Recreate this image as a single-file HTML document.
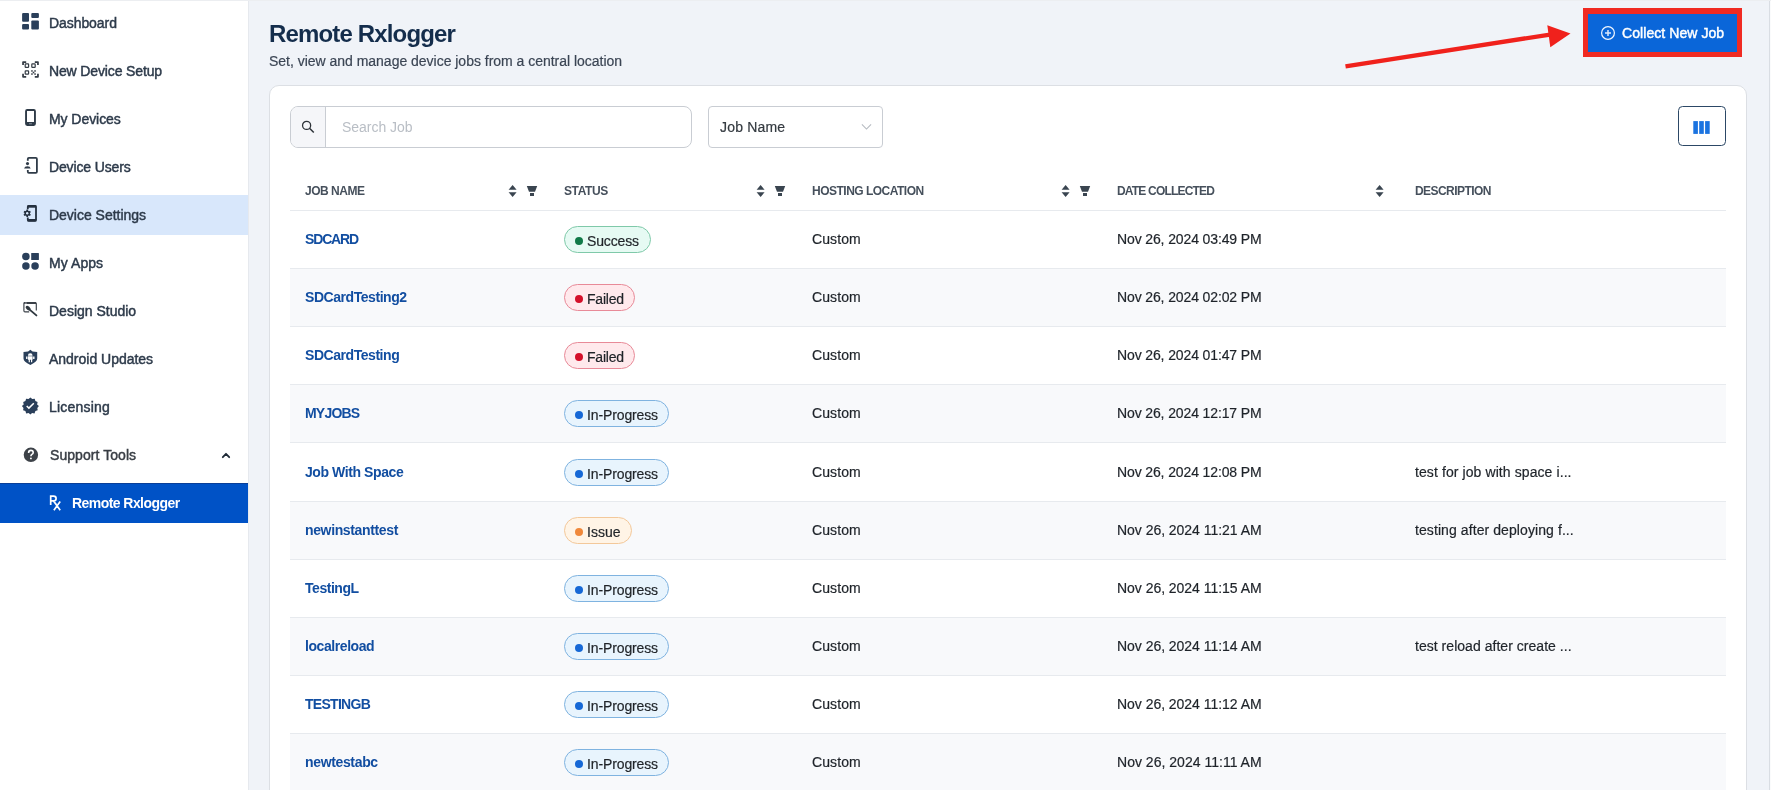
<!DOCTYPE html>
<html><head><meta charset="utf-8">
<style>
*{box-sizing:border-box;margin:0;padding:0}
html,body{width:1771px;height:790px;overflow:hidden}
body{font-family:"Liberation Sans",sans-serif;background:#f0f3f8;position:relative;color:#1f2a37}
.abs{position:absolute}
.sb{position:absolute;left:0;top:0;width:248px;height:790px;background:#fff}
.ni{position:absolute;left:0;width:248px;height:40px;font-size:14px;color:#2b3748;}
.ni .t{position:absolute;left:49px;top:13px;line-height:16px;white-space:nowrap}
.ni svg{position:absolute}
.ni.sel{background:#d8e7fb}
.ni.act{background:#0052c6;color:#fff}
.h1{position:absolute;left:269px;top:20px;font-size:24px;font-weight:bold;color:#142d4c;line-height:28px;white-space:nowrap}
.sub{position:absolute;left:269px;top:53px;font-size:14px;color:#3b4554;line-height:16px;white-space:nowrap}
.card{position:absolute;left:269px;top:85px;width:1478px;height:721px;background:#fff;border:1px solid #dcdfe4;border-radius:10px}
.search{position:absolute;left:290px;top:106px;width:402px;height:42px;border:1px solid #c9cdd3;border-radius:8px;background:#fff;overflow:hidden}
.search .ic{position:absolute;left:0;top:0;width:35px;height:40px;background:#f5f6f9;border-right:1px solid #c9cdd3}
.search .ph{position:absolute;left:52px;top:12px;font-size:14px;line-height:16px;color:#b9bec5}
.dd{position:absolute;left:708px;top:106px;width:175px;height:42px;border:1px solid #c9cdd3;border-radius:4px;background:#fff}
.dd .v{position:absolute;left:11px;top:12px;font-size:14px;line-height:16px;color:#343a40}
.colbtn{position:absolute;left:1678px;top:106px;width:48px;height:40px;border:1.3px solid #2c4866;border-radius:4.5px;background:#fff}
.th{position:absolute;top:184px;font-size:12px;line-height:14px;font-weight:bold;color:#3d4754;white-space:nowrap}
.ln{position:absolute;left:290px;width:1436px;height:1px;background:#e7eaee}
.row{position:absolute;left:290px;width:1436px}
.jn{position:absolute;left:305px;font-size:14px;line-height:16px;color:#0b4ea2;font-weight:bold;white-space:nowrap}
.td{position:absolute;font-size:14px;line-height:16px;color:#1e2329;white-space:nowrap}
.bd{position:absolute;left:564px;height:27px;border-radius:13.5px;border:1px solid;font-size:14px;line-height:24px;padding-left:23px;color:#1f2328;white-space:nowrap}
.bd i{position:absolute;left:10.2px;top:10.2px;width:8px;height:8px;border-radius:50%}
.bd.s{background:#e6faf3;border-color:#7fc9a9}.bd.s i{background:#117a48}
.bd.f{background:#ffe9ec;border-color:#e88a98}.bd.f i{background:#d4102a}
.bd.p{background:#e8f4fd;border-color:#7fb3e0}.bd.p i{background:#1668d6}
.bd.i{background:#fff4e6;border-color:#f3c89a}.bd.i i{background:#f0883a}
.btn-out{position:absolute;left:1583px;top:8px;width:159px;height:49px;background:#f02a22}
.btn{position:absolute;left:1588px;top:14px;width:149px;height:38px;background:#0a66d9;color:#fff;font-size:14px}
.btn .t{position:absolute;left:35px;top:11px;line-height:16px;white-space:nowrap}
.tx{position:absolute;line-height:1;white-space:nowrap;z-index:5;will-change:transform}
.stk{-webkit-text-stroke:0.45px currentColor}
.edge{position:absolute;left:1769px;top:0;width:1px;height:790px;background:#d9dde3}
.edge2{position:absolute;left:1770px;top:0;width:1px;height:790px;background:#fafbfc}
.sbb{position:absolute;left:248px;top:0;width:1px;height:790px;background:#e6e9ee}
.topl{position:absolute;left:0;top:0;width:1771px;height:1px;background:#eceef1;z-index:9}
.stk2{-webkit-text-stroke:0.2px currentColor}
.ni.act{box-shadow:inset 0 1px 0 #0a3f98}

</style></head><body>
<div class="sb">
  <svg class="abs" style="left:0;top:0;z-index:2" width="248" height="530" viewBox="0 0 248 530">
    <g fill="#2a3f5a">
      <!-- dashboard -->
      <rect x="22.1" y="13.1" width="6.9" height="8.7" rx="1"/>
      <rect x="22.1" y="24.1" width="6.9" height="5.5" rx="1"/>
      <rect x="31.3" y="13.1" width="7.6" height="4.8" rx="1"/>
      <rect x="31.3" y="20.5" width="7.6" height="9.1" rx="1"/>
    </g>
    <!-- QR -->
    <g fill="none" stroke="#353c45" stroke-width="1.75" stroke-linejoin="round">
      <path d="M23.05 65 V62.05 H26.2 M34.8 62.05 H37.95 V65 M37.95 73.8 V76.75 H34.8 M26.2 76.75 H23.05 V73.8"/>
    </g>
    <g fill="none" stroke="#353c45" stroke-width="1.2">
      <rect x="25.2" y="63.9" width="3.4" height="3.4" rx="0.6"/>
      <rect x="31.8" y="63.9" width="3.4" height="3.4" rx="0.6"/>
      <rect x="25.2" y="70.8" width="3.4" height="3.4" rx="0.6"/>
    </g>
    <g fill="#353c45">
      <rect x="31.2" y="70.2" width="1.5" height="1.5"/><rect x="34.3" y="70.2" width="1.5" height="1.5"/>
      <rect x="32.7" y="71.7" width="1.6" height="1.6"/>
      <rect x="31.2" y="73.3" width="1.5" height="1.5"/><rect x="34.3" y="73.3" width="1.5" height="1.5"/>
    </g>
    <!-- my devices phone -->
    <path d="M27.2 109.1 H33.8 A2.1 2.1 0 0 1 35.9 111.2 V123.8 A2.1 2.1 0 0 1 33.8 125.9 H27.2 A2.1 2.1 0 0 1 25.1 123.8 V111.2 A2.1 2.1 0 0 1 27.2 109.1 Z M27 111 V121.9 H34 V111 Z" fill="#2f3b48" fill-rule="evenodd"/>
    <rect x="29" y="123.3" width="2.9" height="0.9" fill="#8c96a2"/>
    <!-- device users -->
    <path d="M27.8 160.7 V159 Q27.8 157.9 28.9 157.9 H35.8 Q36.9 157.9 36.9 159 V171.8 Q36.9 172.9 35.8 172.9 H28.9 Q27.8 172.9 27.8 171.8 V169.9" fill="none" stroke="#2f3b48" stroke-width="1.8"/>
    <circle cx="27.5" cy="163.6" r="1.55" fill="#2f3b48"/>
    <path d="M24.1 168.6 Q24.5 166.3 27.4 166.3 Q30.3 166.3 30.7 168.6 Z" fill="#2f3b48"/>
    <!-- device settings -->
    <path d="M27.8 209.2 V206.8 Q27.8 205.8 28.8 205.8 H35 Q36 205.8 36 206.8 V219.8 Q36 220.8 35 220.8 H28.8 Q27.8 220.8 27.8 219.8 V217.6" fill="none" stroke="#24303f" stroke-width="1.8"/>
    <rect x="27.5" y="205.2" width="8.8" height="2.5" fill="#24303f"/>
    <rect x="27.5" y="219" width="8.8" height="2.4" fill="#24303f"/>
    <g transform="translate(27.2 213.3)" fill="#24303f">
      <circle r="2.75"/>
      <rect x="-0.85" y="-3.75" width="1.7" height="7.5"/>
      <rect x="-0.85" y="-3.75" width="1.7" height="7.5" transform="rotate(60)"/>
      <rect x="-0.85" y="-3.75" width="1.7" height="7.5" transform="rotate(120)"/>
      <circle r="1.2" fill="#d8e7fb"/>
    </g>
    <!-- my apps -->
    <g fill="#2a3f5a">
      <circle cx="25.9" cy="256.6" r="3.75"/>
      <rect x="31.2" y="253.1" width="7.7" height="6.9" rx="0.5"/>
      <circle cx="25.9" cy="265.9" r="3.75"/>
      <circle cx="35.05" cy="265.9" r="3.75"/>
    </g>
    <!-- design studio -->
    <path d="M29.2 311.9 H25 Q23.9 311.9 23.9 310.8 V303.3 Q23.9 302.6 25 302.6 H35.2 Q36.3 302.6 36.3 303.6 V310.4" fill="none" stroke="#3a4048" stroke-width="1.15"/>
    <rect x="24.2" y="302.1" width="11.8" height="1.9" fill="#3a4048"/>
    <rect x="25.4" y="302.6" width="1.1" height="1" fill="#fff"/>
    <path d="M29.6 309.6 L36.4 315.4" stroke="#2f3840" stroke-width="1.9" stroke-linecap="round"/><ellipse cx="28.1" cy="308.1" rx="2.9" ry="1.75" transform="rotate(42 28.1 308.1)" fill="#2f3840"/>
    <!-- android shield -->
    <path d="M30.35 349.8 L32.6 351.4 L37.2 351.9 V358.6 Q37.2 361.9 30.35 365 Q23.5 361.9 23.5 358.6 V351.9 L28.1 351.4 Z" fill="#2a3f5a"/>
    <path d="M27.9 355.7 A2.35 2.35 0 0 1 32.6 355.7 Z M27.9 356.2 H32.6 V359.8 H32.2 V362.2 H31 V359.8 H29.9 V362.2 H28.7 V359.8 H27.9 Z M26.1 356.4 H27.4 V359.1 H26.1 Z M33.1 356.4 H34.5 V359.1 H33.1 Z" fill="#fff"/>
    <!-- licensing seal -->
    <path d="M30.4 397.6 L32.3 399.1 L34.7 398.7 L35.4 401 L37.6 402 L37.1 404.4 L38.9 406.1 L37.3 407.9 L37.7 410.3 L35.4 411.1 L34.5 413.4 L32.1 412.9 L30.4 414.6 L28.6 412.9 L26.2 413.4 L25.4 411.1 L23.1 410.3 L23.5 407.9 L21.9 406.1 L23.7 404.4 L23.2 402 L25.4 401 L26.1 398.7 L28.5 399.1 Z" fill="#2a3f5a"/>
    <path d="M26.7 406 L28.9 408.1 L33.8 403.2" fill="none" stroke="#fff" stroke-width="1.5"/>
    <!-- support tools ? -->
    <circle cx="30.9" cy="454.8" r="7.2" fill="#3d4248"/>
    <path d="M28.6 452.9 Q28.6 450.4 30.9 450.4 Q33.2 450.4 33.2 452.5 Q33.2 453.7 31.9 454.4 Q30.9 455 30.9 456.3" fill="none" stroke="#fff" stroke-width="1.6"/>
    <circle cx="30.9" cy="458.4" r="0.95" fill="#fff"/>
    <!-- chevron -->
    <path d="M222.8 457.2 L226 453.8 L229.2 457.2" fill="none" stroke="#1f2a37" stroke-width="1.8" stroke-linecap="round" stroke-linejoin="round"/>
    <!-- Rx -->
    <path d="M50.7 505 V496.1 H53.6 Q56.1 496.1 56.1 498.5 Q56.1 500.9 53.6 500.9 H50.7 M53.4 500.9 L56.3 504.6 M53.9 501.4 L60.2 510.2 M60.2 501.4 L53.9 510.2" fill="none" stroke="#fff" stroke-width="1.7"/>
  </svg>
  <div class="ni" style="top:2px"></div>
  <div class="ni" style="top:50px"></div>
  <div class="ni" style="top:98px"></div>
  <div class="ni" style="top:146px"></div>
  <div class="ni sel" style="top:195px"></div>
  <div class="ni" style="top:242px"></div>
  <div class="ni" style="top:290px"></div>
  <div class="ni" style="top:338px"></div>
  <div class="ni" style="top:386px"></div>
  <div class="ni" style="top:434px"></div>
  <div class="ni act" style="top:483px"></div>
</div>

<div class="sbb"></div><div class="edge"></div><div class="edge2"></div><div class="topl"></div>
<div class="btn-out"></div>
<div class="btn"><svg class="abs" style="left:12px;top:11px" width="16" height="16" viewBox="0 0 16 16"><circle cx="8" cy="8" r="6.4" fill="none" stroke="#f2f7ff" stroke-width="1.2"/><path d="M8 5 V11 M5 8 H11" stroke="#dce8fb" stroke-width="1.5"/></svg></div>
<svg class="abs" style="left:1330px;top:15px" width="260" height="65" viewBox="1330 15 260 65">
  <path d="M1345.5 66.4 L1550 34.6" stroke="#f0211c" stroke-width="4.4" stroke-linecap="butt"/>
  <path d="M1547.3 25.3 L1570.5 33.4 L1550.3 47.3 Z" fill="#f0211c"/>
</svg>
<div class="card"></div>
<div class="search"><div class="ic"><svg class="abs" style="left:10px;top:13px;overflow:visible" width="16" height="16" viewBox="0 0 16 16"><circle cx="5.6" cy="5.4" r="4.05" fill="none" stroke="#2d3339" stroke-width="1.3"/><path d="M8.5 8.3 L12.8 12.5" stroke="#2d3339" stroke-width="1.5"/></svg></div></div>
<div class="dd"><svg class="abs" style="left:150px;top:14px" width="16" height="12" viewBox="0 0 16 12"><path d="M2.9 3.3 L7.5 8.1 L12.1 3.3" fill="none" stroke="#b5bac0" stroke-width="1.05"/></svg></div>
<div class="colbtn"><svg class="abs" style="left:14px;top:14px" width="18" height="13" viewBox="0 0 18 13"><rect x="0.3" y="0.1" width="4.6" height="12.8" fill="#1a73e0"/><rect x="6.2" y="0.1" width="4.6" height="12.8" fill="#1a73e0"/><rect x="12.1" y="0.1" width="4.6" height="12.8" fill="#1a73e0"/></svg></div>


<svg class="abs" style="left:508px;top:184px" width="10" height="14" viewBox="0 0 10 14"><path d="M4.6 1 L8.6 5.7 L0.6 5.7Z M0.6 8.2 L8.6 8.2 L4.6 13Z" fill="#3a4550"/></svg><svg class="abs" style="left:526px;top:185px" width="12" height="12" viewBox="0 0 12 12"><path d="M0.8 1 L11.2 1 L9 6.7 L3 6.7Z M4 8 L8 8 L8 11 L4 11Z" fill="#3a4550"/></svg>
<svg class="abs" style="left:756px;top:184px" width="10" height="14" viewBox="0 0 10 14"><path d="M4.6 1 L8.6 5.7 L0.6 5.7Z M0.6 8.2 L8.6 8.2 L4.6 13Z" fill="#3a4550"/></svg><svg class="abs" style="left:774px;top:185px" width="12" height="12" viewBox="0 0 12 12"><path d="M0.8 1 L11.2 1 L9 6.7 L3 6.7Z M4 8 L8 8 L8 11 L4 11Z" fill="#3a4550"/></svg>
<svg class="abs" style="left:1061px;top:184px" width="10" height="14" viewBox="0 0 10 14"><path d="M4.6 1 L8.6 5.7 L0.6 5.7Z M0.6 8.2 L8.6 8.2 L4.6 13Z" fill="#3a4550"/></svg><svg class="abs" style="left:1079px;top:185px" width="12" height="12" viewBox="0 0 12 12"><path d="M0.8 1 L11.2 1 L9 6.7 L3 6.7Z M4 8 L8 8 L8 11 L4 11Z" fill="#3a4550"/></svg>
<svg class="abs" style="left:1375px;top:184px" width="10" height="14" viewBox="0 0 10 14"><path d="M4.6 1 L8.6 5.7 L0.6 5.7Z M0.6 8.2 L8.6 8.2 L4.6 13Z" fill="#3a4550"/></svg>
<div class="ln" style="top:210px"></div>

<div class="row" style="top:211px;height:57px;background:#fff"></div>
<div class="ln" style="top:268px"></div>
<div class="bd s" style="top:226px;width:87px"><i></i></div>
<div class="row" style="top:269px;height:57px;background:#f8f9fb"></div>
<div class="ln" style="top:326px"></div>
<div class="bd f" style="top:284px;width:71px"><i></i></div>
<div class="row" style="top:327px;height:57px;background:#fff"></div>
<div class="ln" style="top:384px"></div>
<div class="bd f" style="top:342px;width:71px"><i></i></div>
<div class="row" style="top:385px;height:57px;background:#f8f9fb"></div>
<div class="ln" style="top:442px"></div>
<div class="bd p" style="top:400px;width:105px"><i></i></div>
<div class="row" style="top:443px;height:58px;background:#fff"></div>
<div class="ln" style="top:501px"></div>
<div class="bd p" style="top:459px;width:105px"><i></i></div>
<div class="row" style="top:502px;height:57px;background:#f8f9fb"></div>
<div class="ln" style="top:559px"></div>
<div class="bd i" style="top:517px;width:68px"><i></i></div>
<div class="row" style="top:560px;height:57px;background:#fff"></div>
<div class="ln" style="top:617px"></div>
<div class="bd p" style="top:575px;width:105px"><i></i></div>
<div class="row" style="top:618px;height:57px;background:#f8f9fb"></div>
<div class="ln" style="top:675px"></div>
<div class="bd p" style="top:633px;width:105px"><i></i></div>
<div class="row" style="top:676px;height:57px;background:#fff"></div>
<div class="ln" style="top:733px"></div>
<div class="bd p" style="top:691px;width:105px"><i></i></div>
<div class="row" style="top:734px;height:57px;background:#f8f9fb"></div>
<div class="ln" style="top:791px"></div>
<div class="bd p" style="top:749px;width:105px"><i></i></div>
<div class="tx stk" style="left:48.96px;top:16.15px;font-size:14px;color:#2d3a4a;font-weight:normal;letter-spacing:-0.072px">Dashboard</div>
<div class="tx stk" style="left:48.96px;top:64.15px;font-size:14px;color:#2d3a4a;font-weight:normal;letter-spacing:-0.137px">New Device Setup</div>
<div class="tx stk" style="left:48.96px;top:112.15px;font-size:14px;color:#2d3a4a;font-weight:normal;letter-spacing:-0.060px">My Devices</div>
<div class="tx stk" style="left:48.96px;top:160.15px;font-size:14px;color:#2d3a4a;font-weight:normal;letter-spacing:-0.139px">Device Users</div>
<div class="tx stk" style="left:48.96px;top:208.15px;font-size:14px;color:#2d3a4a;font-weight:normal;letter-spacing:-0.012px">Device Settings</div>
<div class="tx stk" style="left:48.96px;top:256.15px;font-size:14px;color:#2d3a4a;font-weight:normal;letter-spacing:0.069px">My Apps</div>
<div class="tx stk" style="left:48.96px;top:304.15px;font-size:14px;color:#2d3a4a;font-weight:normal;letter-spacing:-0.004px">Design Studio</div>
<div class="tx stk" style="left:48.96px;top:352.15px;font-size:14px;color:#2d3a4a;font-weight:normal;letter-spacing:-0.013px">Android Updates</div>
<div class="tx stk" style="left:48.96px;top:400.15px;font-size:14px;color:#2d3a4a;font-weight:normal;letter-spacing:0.195px">Licensing</div>
<div class="tx stk" style="left:50.06px;top:448.15px;font-size:14px;color:#383d44;font-weight:normal;letter-spacing:0.063px">Support Tools</div>
<div class="tx" style="left:71.96px;top:496.15px;font-size:14px;color:#ffffff;font-weight:bold;letter-spacing:-0.557px">Remote Rxlogger</div>
<div class="tx" style="left:268.96px;top:21.68px;font-size:24px;color:#142d4c;font-weight:bold;letter-spacing:-0.842px">Remote Rxlogger</div>
<div class="tx stk2" style="left:268.86px;top:53.85px;font-size:14px;color:#3b4554;font-weight:normal;letter-spacing:-0.018px">Set, view and manage device jobs from a central location</div>
<div class="tx stk" style="left:1622.36px;top:25.95px;font-size:14px;color:#ffffff;font-weight:normal;letter-spacing:0.069px">Collect New Job</div>
<div class="tx" style="left:342.36px;top:120.15px;font-size:14px;color:#b9bec5;font-weight:normal;letter-spacing:-0.023px">Search Job</div>
<div class="tx stk2" style="left:719.86px;top:120.25px;font-size:14px;color:#343a40;font-weight:normal;letter-spacing:0.187px">Job Name</div>
<div class="tx" style="left:304.98px;top:184.84px;font-size:12px;color:#46505c;font-weight:bold;letter-spacing:-0.483px">JOB NAME</div>
<div class="tx" style="left:564.38px;top:184.84px;font-size:12px;color:#46505c;font-weight:bold;letter-spacing:-0.392px">STATUS</div>
<div class="tx" style="left:811.98px;top:184.84px;font-size:12px;color:#46505c;font-weight:bold;letter-spacing:-0.508px">HOSTING LOCATION</div>
<div class="tx" style="left:1117.38px;top:184.84px;font-size:12px;color:#46505c;font-weight:bold;letter-spacing:-0.807px">DATE COLLECTED</div>
<div class="tx" style="left:1415.48px;top:184.84px;font-size:12px;color:#46505c;font-weight:bold;letter-spacing:-0.566px">DESCRIPTION</div>
<div class="tx" style="left:304.76px;top:232.15px;font-size:14px;color:#124ea1;font-weight:bold;letter-spacing:-1.154px">SDCARD</div>
<div class="tx stk2" style="left:587.36px;top:233.75px;font-size:14px;color:#1f2328;font-weight:normal;letter-spacing:-0.134px">Success</div>
<div class="tx stk2" style="left:811.86px;top:231.85px;font-size:14px;color:#1e2329;font-weight:normal;letter-spacing:0.097px">Custom</div>
<div class="tx stk2" style="left:1117.26px;top:231.55px;font-size:14px;color:#1e2329;font-weight:normal;letter-spacing:-0.124px">Nov 26, 2024 03:49 PM</div>
<div class="tx" style="left:304.76px;top:290.15px;font-size:14px;color:#124ea1;font-weight:bold;letter-spacing:-0.443px">SDCardTesting2</div>
<div class="tx stk2" style="left:587.36px;top:291.75px;font-size:14px;color:#1f2328;font-weight:normal;letter-spacing:-0.204px">Failed</div>
<div class="tx stk2" style="left:811.86px;top:289.85px;font-size:14px;color:#1e2329;font-weight:normal;letter-spacing:0.097px">Custom</div>
<div class="tx stk2" style="left:1117.26px;top:289.55px;font-size:14px;color:#1e2329;font-weight:normal;letter-spacing:-0.124px">Nov 26, 2024 02:02 PM</div>
<div class="tx" style="left:304.76px;top:348.15px;font-size:14px;color:#124ea1;font-weight:bold;letter-spacing:-0.448px">SDCardTesting</div>
<div class="tx stk2" style="left:587.36px;top:349.75px;font-size:14px;color:#1f2328;font-weight:normal;letter-spacing:-0.204px">Failed</div>
<div class="tx stk2" style="left:811.86px;top:347.85px;font-size:14px;color:#1e2329;font-weight:normal;letter-spacing:0.097px">Custom</div>
<div class="tx stk2" style="left:1117.26px;top:347.55px;font-size:14px;color:#1e2329;font-weight:normal;letter-spacing:-0.124px">Nov 26, 2024 01:47 PM</div>
<div class="tx" style="left:304.76px;top:406.15px;font-size:14px;color:#124ea1;font-weight:bold;letter-spacing:-0.801px">MYJOBS</div>
<div class="tx stk2" style="left:587.36px;top:407.75px;font-size:14px;color:#1f2328;font-weight:normal;letter-spacing:-0.124px">In-Progress</div>
<div class="tx stk2" style="left:811.86px;top:405.85px;font-size:14px;color:#1e2329;font-weight:normal;letter-spacing:0.097px">Custom</div>
<div class="tx stk2" style="left:1117.26px;top:405.55px;font-size:14px;color:#1e2329;font-weight:normal;letter-spacing:-0.124px">Nov 26, 2024 12:17 PM</div>
<div class="tx" style="left:304.76px;top:465.15px;font-size:14px;color:#124ea1;font-weight:bold;letter-spacing:-0.416px">Job With Space</div>
<div class="tx stk2" style="left:587.36px;top:466.75px;font-size:14px;color:#1f2328;font-weight:normal;letter-spacing:-0.124px">In-Progress</div>
<div class="tx stk2" style="left:811.86px;top:464.85px;font-size:14px;color:#1e2329;font-weight:normal;letter-spacing:0.097px">Custom</div>
<div class="tx stk2" style="left:1117.26px;top:464.55px;font-size:14px;color:#1e2329;font-weight:normal;letter-spacing:-0.124px">Nov 26, 2024 12:08 PM</div>
<div class="tx stk2" style="left:1414.86px;top:464.55px;font-size:14px;color:#1e2329;font-weight:normal;letter-spacing:0.090px">test for job with space i...</div>
<div class="tx" style="left:304.76px;top:523.15px;font-size:14px;color:#124ea1;font-weight:bold;letter-spacing:-0.361px">newinstanttest</div>
<div class="tx stk2" style="left:587.36px;top:524.75px;font-size:14px;color:#1f2328;font-weight:normal;letter-spacing:0.013px">Issue</div>
<div class="tx stk2" style="left:811.86px;top:522.85px;font-size:14px;color:#1e2329;font-weight:normal;letter-spacing:0.097px">Custom</div>
<div class="tx stk2" style="left:1117.26px;top:522.55px;font-size:14px;color:#1e2329;font-weight:normal;letter-spacing:-0.034px">Nov 26, 2024 11:21 AM</div>
<div class="tx stk2" style="left:1414.86px;top:522.55px;font-size:14px;color:#1e2329;font-weight:normal;letter-spacing:0.085px">testing after deploying f...</div>
<div class="tx" style="left:304.76px;top:581.15px;font-size:14px;color:#124ea1;font-weight:bold;letter-spacing:-0.454px">TestingL</div>
<div class="tx stk2" style="left:587.36px;top:582.75px;font-size:14px;color:#1f2328;font-weight:normal;letter-spacing:-0.124px">In-Progress</div>
<div class="tx stk2" style="left:811.86px;top:580.85px;font-size:14px;color:#1e2329;font-weight:normal;letter-spacing:0.097px">Custom</div>
<div class="tx stk2" style="left:1117.26px;top:580.55px;font-size:14px;color:#1e2329;font-weight:normal;letter-spacing:-0.034px">Nov 26, 2024 11:15 AM</div>
<div class="tx" style="left:304.76px;top:639.15px;font-size:14px;color:#124ea1;font-weight:bold;letter-spacing:-0.430px">localreload</div>
<div class="tx stk2" style="left:587.36px;top:640.75px;font-size:14px;color:#1f2328;font-weight:normal;letter-spacing:-0.124px">In-Progress</div>
<div class="tx stk2" style="left:811.86px;top:638.85px;font-size:14px;color:#1e2329;font-weight:normal;letter-spacing:0.097px">Custom</div>
<div class="tx stk2" style="left:1117.26px;top:638.55px;font-size:14px;color:#1e2329;font-weight:normal;letter-spacing:-0.034px">Nov 26, 2024 11:14 AM</div>
<div class="tx stk2" style="left:1414.86px;top:638.55px;font-size:14px;color:#1e2329;font-weight:normal;letter-spacing:0.033px">test reload after create ...</div>
<div class="tx" style="left:304.76px;top:697.15px;font-size:14px;color:#124ea1;font-weight:bold;letter-spacing:-0.709px">TESTINGB</div>
<div class="tx stk2" style="left:587.36px;top:698.75px;font-size:14px;color:#1f2328;font-weight:normal;letter-spacing:-0.124px">In-Progress</div>
<div class="tx stk2" style="left:811.86px;top:696.85px;font-size:14px;color:#1e2329;font-weight:normal;letter-spacing:0.097px">Custom</div>
<div class="tx stk2" style="left:1117.26px;top:696.55px;font-size:14px;color:#1e2329;font-weight:normal;letter-spacing:-0.034px">Nov 26, 2024 11:12 AM</div>
<div class="tx" style="left:304.76px;top:755.15px;font-size:14px;color:#124ea1;font-weight:bold;letter-spacing:-0.348px">newtestabc</div>
<div class="tx stk2" style="left:587.36px;top:756.75px;font-size:14px;color:#1f2328;font-weight:normal;letter-spacing:-0.124px">In-Progress</div>
<div class="tx stk2" style="left:811.86px;top:754.85px;font-size:14px;color:#1e2329;font-weight:normal;letter-spacing:0.097px">Custom</div>
<div class="tx stk2" style="left:1117.26px;top:754.55px;font-size:14px;color:#1e2329;font-weight:normal;letter-spacing:0.019px">Nov 26, 2024 11:11 AM</div>
</body></html>
